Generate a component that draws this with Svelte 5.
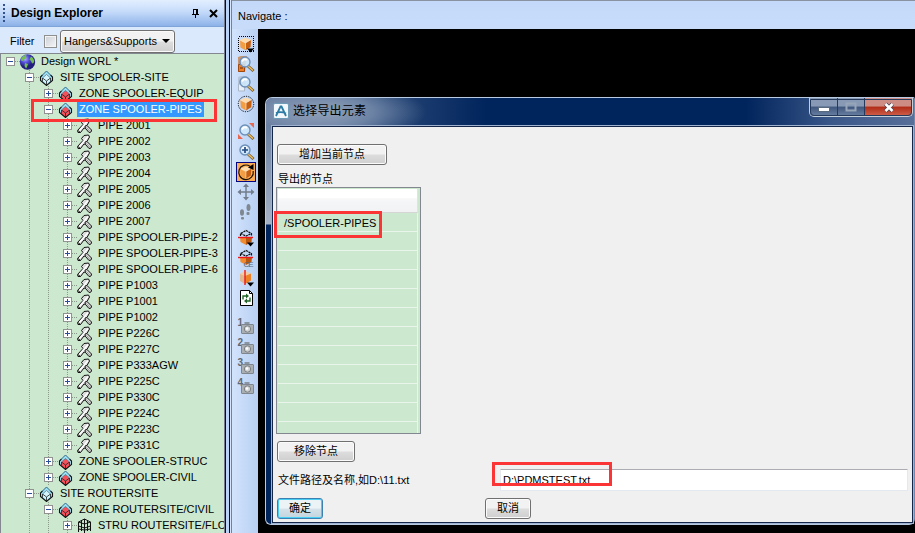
<script>
  const pipes = ['2001', '2002', '2003', '2004', '2005', '2006', '2007', 'SPOOLER-PIPE-2', 'SPOOLER-PIPE-3', 'SPOOLER-PIPE-6', 'P1003', 'P1001', 'P1002', 'P226C', 'P227C', 'P333AGW', 'P225C', 'P330C', 'P224C', 'P223C', 'P331C'];
  const rows = [
    { d: 0, k: 'world', t: 'Design WORL *', open: true, g: [] },
    { d: 1, k: 'site', t: 'SITE SPOOLER-SITE', open: true, g: [] },
    { d: 2, k: 'zone', t: 'ZONE SPOOLER-EQUIP', g: [1] },
    { d: 2, k: 'zone', t: 'ZONE SPOOLER-PIPES', open: true, sel: true, g: [1] },
    ...pipes.map((p) => ({ d: 3, k: 'pipe', t: 'PIPE ' + p, g: [1, 2] })),
    { d: 2, k: 'zone', t: 'ZONE SPOOLER-STRUC', g: [1] },
    { d: 2, k: 'zone', t: 'ZONE SPOOLER-CIVIL', g: [1] },
    { d: 1, k: 'site', t: 'SITE ROUTERSITE', open: true, g: [] },
    { d: 2, k: 'zone', t: 'ZONE ROUTERSITE/CIVIL', open: true, g: [1] },
    { d: 3, k: 'stru', t: 'STRU ROUTERSITE/FLO', g: [1, 2] }
  ];
  const groups = [
    ['boxmenu', 'findbox', 'find', 'boxround'],
    ['zoomfit', 'zoomin', 'rotate', 'pan', 'walk'],
    ['clip', 'clipce', 'clipbox', 'refresh'],
    ['1', '2', '3', '4']
  ];
  const cells = Array.from({ length: 12 }, (_, i) => (i === 0 ? '/SPOOLER-PIPES' : ''));
</script>

{#snippet cube(s = 1, x = 0, y = 0)}
  <g transform="translate({x} {y}) scale({s})">
    <path d="M4 6l5.500-2.500L16 5.500 10 9z" fill="#ffdcae" />
    <path d="M4 6l6 3v8l-5.500-3z" fill="#f39d45" />
    <path d="M10 9l6-3.500-.5 8L10 17z" fill="#c65f10" />
    <path d="M4 6l6 3 6-3.500M10 9v7" stroke="#fff0d5" stroke-width=".7" fill="none" />
  </g>
{/snippet}

{#snippet lens()}
  <path d="M12 12l5.500 5" stroke="#6e5a3c" stroke-width="3" />
  <path d="M12 12l5 4.500" stroke="#f2bd55" stroke-width="1.500" />
  <circle cx="9" cy="8" r="5" fill="#cfe9fb" fill-opacity=".85" stroke="#6d8fb8" stroke-width="1.400" />
  <path d="M6 7.500q2-3.500 5-1.500" stroke="#fff" stroke-width="1.800" fill="none" />
{/snippet}

<div class="app">
  <aside>
    <header>
      <i class="grip"></i><b>Design Explorer</b>
      <svg class="pin" width="9" height="10" viewBox="0 0 9 10" shape-rendering="crispEdges"><path d="M2.500 1v5M2 1.500h5M1 6.500h7M4.500 7v3" stroke="#000" fill="none" /><path d="M6 1v5" stroke="#000" stroke-width="2" /></svg>
      <svg width="9" height="9" viewBox="0 0 9 9"><path d="M1 1l7 7M8 1L1 8" stroke="#000" stroke-width="2" /></svg>
    </header>
    <div class="filter">
      <span>Filter</span><i class="check"></i>
      <div class="select"><span>Hangers&amp;Supports</span><i></i></div>
    </div>
    <div class="tree">
      {#each rows as r, i}
        <div class="row">
          {#each Array(r.d) as _, c}<i class="indent" class:line={r.g.includes(c)}></i>{/each}
          <svg class="exp" width="19" height="16" viewBox="0 0 19 16" shape-rendering="crispEdges">
            <path d="M9.500 {i === 0 ? 8 : 0}V{r.d === 0 ? 8 : 16}M10 7.500h9" stroke="#8c9a8c" stroke-dasharray="1 1" fill="none" />
            <rect x="5.500" y="3.500" width="8" height="8" rx="1" fill="#fff" stroke="#919191" />
            <path d={r.open ? 'M7 7.500h5' : 'M7 7.500h5M9.500 5v5'} stroke="#2a4d9b" />
          </svg>
          <svg class="ico" width="17" height="16" viewBox="0 0 17 16">
            {#if r.k === 'world'}
              <defs><radialGradient id="globe" cx=".35" cy=".3"><stop offset="0" stop-color="#b2b1ff" /><stop offset=".5" stop-color="#5450dc" /><stop offset="1" stop-color="#231f7c" /></radialGradient></defs>
              <circle cx="8.500" cy="8" r="7.700" fill="url(#globe)" />
              <path d="M2.500 4l2.500-2.500 2.500-.5-.5 2 .5 1-2.500 1.500L4 7 2 6.500zM6 9l3 1-1 3-1 1.500-1.500-2.500zM12 2.500l2 1.500 1.300 3-.8 2-1.500.5-1-2.500-1.500-1.500z" fill="#74bf52" />
            {:else if r.k === 'pipe'}
              <path d="M1.500 12.500L7 6.500 5.500 4.500 8 1.500 12.500 1 13.500 3 11 7.500 15.500 12 15 14 13 14.500 9.500 10.500 8 10 4.500 14.500 2 14.500z" fill="#dcdcdc" stroke="#111" stroke-width="1" stroke-linejoin="round" />
              <path d="M12 2.500L3.500 12.500" stroke="#fff" stroke-width="1.300" fill="none" />
              <path d="M9.500 10.500L9 8l2-.5M2 12.500l2.500 2" stroke="#111" fill="none" stroke-width=".9" />
              <path d="M10.500 9.500l3.500 4" stroke="#999" fill="none" />
            {:else if r.k === 'stru'}
              <path d="M2.500 4l6-3 6 3v9M2.500 4v10M8.500 1v15M2.500 4l6 2 6-2M2.500 8l6 2 6-2M2.500 11l6 1 6-1M5.500 3v10M11.500 3v10" stroke="#111" fill="none" />
            {:else}
              <path d="M8.500 .5L14.500 6v4.500L8.500 15.500 2.500 10.500V6z" fill="#9be1f7" />
              {#if r.k === 'zone'}
                <path d="M4.500 8l4-3.500 4 3.500v4l-4 3.500-4-3.500z" fill="#f4505a" />
              {:else}
                <path d="M5 8l3.500-3.500L12 8v3l-3.500 3L5 11z" fill="#d3f3fd" />
              {/if}
              <path d="M4.500 5L2.500 7v3.500l6 5 6-5V7l-2-2" stroke="#111" stroke-width="1.100" fill="none" />
              <path d="M4.500 5l4-4 4 4" stroke="#3d6878" stroke-width="1" fill="none" />
              <path d="M4.500 8l4 3 4-3M8.500 11v4M4.500 8v3.500M12.500 8v3.500" stroke="#222" stroke-width=".8" fill="none" />
              <path d="M5 7.500l3.500-3 3.500 3" stroke="#5b6f7c" stroke-width=".7" fill="none" />
            {/if}
          </svg>
          <span class:sel={r.sel}>{r.t}</span>
        </div>
      {/each}
    </div>
    <div class="mark mark-tree"></div>
  </aside>
  <div class="split"></div>
  <main>
    <div class="nav">Navigate :</div>
    <div class="work">
      <div class="tools">
        {#each groups as g}
          <div class="group">
            {#each g as k}
              <svg width="20" height="20" viewBox="0 0 20 20">
                {#if k === 'boxmenu'}
                  <rect x="2.500" y="1.500" width="15" height="15" fill="none" stroke="#000" stroke-dasharray="1 1" shape-rendering="crispEdges" />
                  {@render cube(0.92, 0.3, -0.4)}<path d="M11 13.500h7l-3.500 4z" />
                {:else if k === 'findbox'}
                  <path d="M2 3l3-1h6l-2 16H2z" fill="#c9946a" /><path d="M2.500 10.500h6v7h-6z" fill="#ef7f25" stroke="#a04a10" /><path d="M4 14h3" stroke="#6f2f08" />{@render lens()}
                {:else if k === 'find'}
                  <path d="M2 3l3-1h6l-2 15H2z" fill="#b5c6da" /><path d="M2.500 10h6v7h-6z" fill="#e9eff8" stroke="#a9b7c9" />{@render lens()}
                {:else if k === 'boxround'}
                  <circle cx="10" cy="10" r="7.700" fill="none" stroke="#000" stroke-dasharray="1.200 1.200" />{@render cube(0.95, 0.5, 0.3)}
                {:else if k === 'zoomfit'}
                  <path d="M13 1h5v5zM2 12v5h5z" fill="#e8694f" />{@render lens()}
                {:else if k === 'zoomin'}
                  {@render lens()}<path d="M6 8h6M9 5v6" stroke="#254c82" stroke-width="1.700" />
                {:else if k === 'rotate'}
                  <rect x=".5" y=".5" width="19" height="19" fill="#fbad55" stroke="#05057f" />
                  {@render cube(0.9, 0.9, 1.3)}
                  <path d="M14 4.200A7.300 7.300 0 1 0 17.200 9" fill="none" stroke="#1d1207" stroke-width="1.200" /><path d="M12 5.500L17.500 2v6z" />
                {:else if k === 'pan'}
                  <path d="M10 3v14M3 10h14" stroke="#737d8b" stroke-width="1.500" /><path d="M10 1.500l3 3.500H7zM10 18.500l3-3.500H7zM1.500 10L5 7v6zM18.500 10L15 7v6z" fill="#737d8b" />
                {:else if k === 'walk'}
                  <g fill="#7f8791"><ellipse cx="6" cy="10.500" rx="2" ry="3.200" /><rect x="5" y="15" width="3" height="2.500" rx="1" /><ellipse cx="12.500" cy="5.500" rx="2" ry="3.500" /><rect x="10.500" y="10" width="3" height="3" rx="1" /></g>
                {:else if k === 'clip' || k === 'clipce'}
                  <path d="M4 9h6v8l-5.500-3z" fill="#ef8c30" /><path d="M10 9h6l-.5 5L10 17z" fill="#b9560d" />
                  <path d="M4.500 8V5.500l5.500-3 5.500 3V8M4.500 5.500L10 8l5.500-2.500" fill="none" stroke="#111" stroke-width="1.200" stroke-dasharray="2.200 .7" />
                  <path d="M2 9.500h15" stroke="#f01818" stroke-width="1.400" />
                  {#if k === 'clip'}<path d="M11 14.500h7l-3.500 4z" />{:else}<text x="7.500" y="19" font-size="8" fill="#56657a" textLength="10">CE</text>{/if}
                {:else if k === 'clipbox'}
                  <path d="M4 6l5-2v12l-5-3z" fill="#dfb892" /><path d="M9 7l6-1.500v7L9 16z" fill="#ed8126" /><path d="M4 6l5-3 6 2.500L9 8z" fill="#efcfaa" />
                  <path d="M9 2v15" stroke="#ef1818" stroke-width="1.400" /><path d="M11 14.500h7l-3.500 4z" />
                {:else if k === 'refresh'}
                  <path d="M4.500 2.500h9l3 3v12h-12z" fill="#fff" stroke="#000" /><path d="M13.500 2.500v3h3" fill="none" stroke="#000" />
                  <path d="M7 11.500V8h4M14 9.500V13h-4" fill="none" stroke="#226729" stroke-width="1.400" /><path d="M10 5.500l3 2.500-3 2.500zM11 10.500L8 13l3 2.500z" fill="#226729" />
                {:else}
                  <text x="1.500" y="8.500" font-size="10" font-weight="bold" fill="#5e6875">{k}</text>
                  <rect x="8.500" y="5" width="5" height="4" fill="#8996a2" />
                  <rect x="5.500" y="7.500" width="12" height="9" rx=".5" fill="#a9afb3" stroke="#7e878f" /><circle cx="11.500" cy="12" r="3.200" fill="#cfd3d4" stroke="#7b7f82" />
                  <circle cx="11" cy="11.500" r="1.300" fill="#fff" />
                {/if}
              </svg>
            {/each}
          </div>
        {/each}
      </div>
      <div class="canvas"></div>
    </div>
  </main>

  <section class="dialog">
    <div class="title">
      <svg width="16" height="16" viewBox="0 0 16 16"><rect x=".5" y=".5" width="15" height="15" rx="1.500" fill="#f2f8fb" stroke="#6d9db6" /><path d="M3 13L7.500 3.500h1L13 13M3 10q5-2 10 .5" fill="none" stroke="#2c7ca5" stroke-width="1.800" /></svg>
      <span>选择导出元素</span>
      <div class="caps">
        <i><svg width="12" height="5"><rect x=".5" y=".5" width="11" height="4" fill="#fff" stroke="#59697e" /></svg></i>
        <i><svg width="12" height="10"><rect x="1.500" y="1.500" width="9" height="7" fill="none" stroke="#96a5b8" stroke-width="2" /></svg></i>
        <i class="close"><svg width="12" height="11" viewBox="0 0 12 11"><path d="M2.500 2l7 7M9.500 2l-7 7" stroke="#4a4351" stroke-width="4" /><path d="M2.500 2l7 7M9.500 2l-7 7" stroke="#fff" stroke-width="2.500" /></svg></i>
      </div>
    </div>
    <div class="body">
      <button class="add">增加当前节点</button>
      <div class="label">导出的节点</div>
      <div class="list">
        <div class="head"></div>
        {#each cells as c}<div class="cell"><span>{c}</span></div>{/each}
        <div class="mark mark-list"></div>
      </div>
      <button class="remove">移除节点</button>
      <div class="path">
        <span>文件路径及名称,如D:\11.txt</span>
        <div class="input">D:\PDMSTEST.txt<div class="mark mark-input"></div></div>
      </div>
      <div class="actions"><button class="ok">确定</button><button>取消</button></div>
    </div>
  </section>
</div>

<style>
  :global(body) { margin: 0; overflow: hidden; }
  .app { position: relative; display: flex; width: 915px; height: 533px; overflow: hidden; background: #c6dbf9; color: #000; font: 11px/16px "Liberation Sans", "Noto Sans CJK SC", sans-serif; white-space: nowrap; }
  .app :global(*) { box-sizing: border-box; }
  i { display: block; flex: none; }
  svg { display: block; flex: none; }
  aside { position: relative; width: 225px; height: 533px; border-right: 1px solid #777b8b; flex: none; }
  header { display: flex; align-items: center; height: 27px; padding: 0 6px 0 3px; background: linear-gradient(#e3efff, #c5dbfa 45%, #8db2e8); border-bottom: 1px solid #7ea4d9; font-size: 12px; }
  header b { flex: 1; margin-left: 6px; }
  .grip { width: 2px; height: 18px; background: repeating-linear-gradient(#33518d 0 2px, transparent 2px 4px); }
  .pin { margin-right: 9px; }
  .filter { display: flex; align-items: center; height: 26px; padding: 2px 0 0 10px; background: #dbe9fc; }
  .filter > span { width: 34px; }
  .check { width: 13px; height: 13px; border: 1px solid #8e8f8f; background: linear-gradient(135deg, #cbcfd5, #f6f6f6); box-shadow: inset 0 0 0 1px #f4f4f4; }
  .select { display: flex; align-items: center; width: 115px; height: 23px; margin-left: 3px; padding: 0 4px 0 3px; border: 1px solid #707070; border-radius: 3px; background: linear-gradient(#f2f2f2 0 48%, #dddddd 52%, #cfcfcf); box-shadow: inset 0 0 0 1px #fafafa; }
  .select span { width: 92px; }
  .select i { margin-left: 6px; border: 4px solid transparent; border-top-color: #000; border-bottom: 0; }
  .tree { height: 480px; overflow: hidden; border-top: 1px solid #828790; border-left: 1px solid #828790; background: #cce8cf; }
  .row { display: flex; height: 16px; align-items: center; }
  .indent { width: 19px; height: 16px; }
  .line { background: repeating-linear-gradient(#8c9a8c 0 1px, transparent 1px 2px) 9px 0 / 1px 16px no-repeat; }
  .ico { margin: 0 1px 0 -1px; }
  .row span { height: 16px; padding: 0 2px; margin-left: 2px; line-height: 15px; }
  .row span.sel { height: 15px; background: #3399ff; color: #fff; margin-top: -1px; line-height: 15px; }
  .mark { position: absolute; border: 3px solid #fb3535; }
  .mark-tree { left: 31px; top: 99px; width: 186px; height: 23px; }
  .split { width: 7px; flex: none; background: linear-gradient(90deg, #00007b 0 1px, #b9d2f7 1px 4px, #00007b 4px 5px, #d9e6fa 5px 6px, #7d8087 6px 7px); }
  main { display: flex; flex: 1; flex-direction: column; border-top: 1px solid #8992a0; }
  .nav { height: 28px; padding: 7px 0 0 6px; background: linear-gradient(#c4d9f9, #c8dcfa); }
  .work { display: flex; flex: 1; }
  .tools { width: 26px; padding: 6px 0 0 4px; background: linear-gradient(90deg, #d2e3fc, #b8d0f3); }
  .group { display: flex; flex-direction: column; }
  .group:nth-child(2) { margin-top: 8px; }
  .group:nth-child(3) { margin-top: 6px; }
  .group:nth-child(4) { margin-top: 9px; }
  .group:nth-child(1) svg:first-child { margin-bottom: -1px; }
  .canvas { flex: 1; background: #000; }
  .dialog { position: absolute; left: 265px; top: 97px; width: 650px; height: 428px; display: flex; flex-direction: column; padding: 0 1px 0 6px; border: 1px solid #b9cbe2; border-right-color: #7189ac; border-radius: 7px 2px 6px 6px; background: linear-gradient(#5b7498, #a5b1c5 126px, #00245c 127px); }
  .title { display: flex; align-items: flex-start; height: 28px; margin: 0 -1px 0 -6px; padding: 5px 0 0 7px; border-radius: 6px 1px 0 0; background: radial-gradient(ellipse 105px 30px at 55px 14px, #8f9fb7 0, rgba(131, 151, 180, .7) 50%, rgba(131, 151, 180, 0)), linear-gradient(90deg, #596f93 0, #526b92 70px, #284777 120px, #00245c 220px, #00245c 480px, #3a5789 565px, #576f99); font-size: 12px; }
  .title span { flex: 1; margin: 0 0 0 4px; letter-spacing: .2px; }
  .caps { display: flex; height: 19px; margin: -5px 1px 0; border: 1px solid #c3cedb; border-top: 0; border-radius: 0 0 5px 5px; overflow: hidden; outline: 1px solid #253a5b; outline-offset: -2px; }
  .caps i { display: flex; align-items: center; justify-content: center; width: 27px; border-right: 1px solid #263a5e; background: linear-gradient(#8799b4 0 45%, #41587e 50%, #6a80a3); }
  .caps i:first-child { width: 28px; padding-top: 5px; }
  .caps .close { width: 47px; border: 0; background: linear-gradient(#cd8c84 0 45%, #b02d18 50%, #d0614c); }
  .body { flex: none; height: 397px; display: flex; flex-direction: column; align-items: flex-start; padding: 16px 4px 0; border: 1px solid #14264a; outline: 1px solid #9fb2cf; background: #f0f0f0; }
  button { flex: none; width: 46px; height: 21px; margin: 0; padding: 0; border: 1px solid #707070; border-radius: 3px; color: #000; background: linear-gradient(#f2f2f2 0 48%, #dddddd 52%, #cfcfcf); box-shadow: inset 0 0 0 1px #fbfbfb; font: inherit; line-height: 19px; }
  .add { width: 110px; margin-top: 1px; }
  .label { flex: none; height: 16px; margin: 6px 0 0 1px; }
  .list { position: relative; flex: none; width: 145px; height: 247px; margin: 0 0 7px -1px; border: 1px solid #828790; background: #cce8cf; padding: 1px 2px 0 1px; display: flex; flex-direction: column; }
  .head { flex: none; height: 24px; border-bottom: 1px solid #d5d5d5; border-right: 1px solid #e0e2e5; background: linear-gradient(#fff 0 40%, #f6f7f8 42%, #f1f2f4); }
  .cell { height: 19px; flex: none; border-bottom: 1px solid #e9f4ea; border-right: 1px solid #e9f4ea; padding-left: 6px; line-height: 20px; }
  .cell:nth-last-child(2) { height: 11px; border-bottom: 0; }
  .mark-list { left: -3px; top: 23px; width: 108px; height: 27px; }
  .remove { width: 78px; }
  .path { flex: none; display: flex; align-items: flex-start; margin-top: 7px; padding-left: 1px; }
  .path > span { width: 222px; padding-top: 3px; }
  .input { position: relative; width: 408px; height: 22px; padding: 0 2px; border: 1px solid #e3e9ef; border-top-color: #abadb3; border-radius: 1px; background: #fff; line-height: 21px; }
  .mark-input { left: -9px; top: -8px; width: 120px; height: 24px; }
  .actions { display: flex; gap: 162px; margin-top: 7px; }
  .ok { border-color: #3c7fb1; background: linear-gradient(#ecf3f7 0 48%, #d5e2e9 52%, #c3d5df); box-shadow: inset 0 0 0 1px #48cdf3; }
</style>
